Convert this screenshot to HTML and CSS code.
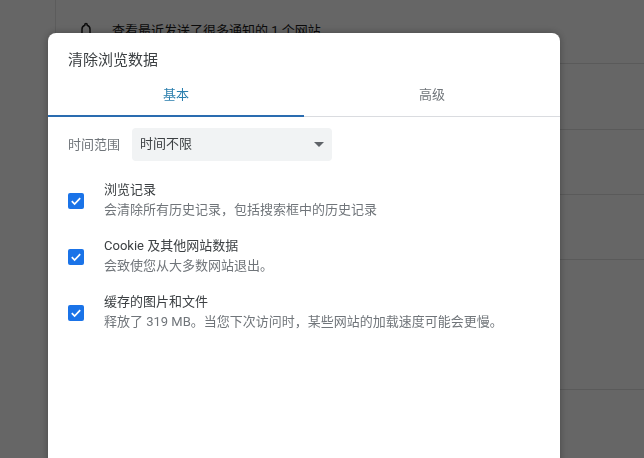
FILE: index.html
```html
<!DOCTYPE html>
<html lang="zh-CN">
<head>
<meta charset="utf-8">
<title>清除浏览数据</title>
<link rel="stylesheet" href="styles.css">
</head>
<body>
<div class="page">
  <div class="side"></div>
  <main class="list">
    <div class="row row-first">
      <svg class="bell" viewBox="0 0 16 16" width="16" height="16"><path d="M8 1.500a1.200 1.200 0 0 0-1.200 1.200v.5C4.900 3.800 4 5.400 4 7.300V11l-1.300 1.300v.7h10.600v-.7L12 11V7.300c0-1.900-.9-3.500-2.800-4.100v-.5A1.200 1.200 0 0 0 8 1.500z" fill="none" stroke="#1d1d1d" stroke-width="1.500"/></svg>
      <span class="notice">查看最近发送了很多通知的 1 个网站</span>
    </div>
    <div class="row row-b"></div>
    <div class="row row-c"></div>
    <div class="row row-c"></div>
    <div class="row row-d"></div>
  </main>
</div>
<div class="scrim"></div>
<section class="dialog">
  <h1 class="title">清除浏览数据</h1>
  <div class="tabs">
    <div class="tab tab-active">基本</div>
    <div class="tab">高级</div>
  </div>
  <div class="range">
    <span class="range-label">时间范围</span>
    <div class="select">
      <span>时间不限</span>
      <span class="caret"></span>
    </div>
  </div>
  <div class="options">
    <div class="option">
      <span class="box"><svg viewBox="0 0 16 16" width="16" height="16"><path d="M3.800 8.200l2.800 2.800 5.600-5.800" fill="none" stroke="#fff" stroke-width="1.700"/></svg></span>
      <div class="option-text">
        <div class="option-name">浏览记录</div>
        <div class="option-desc">会清除所有历史记录，包括搜索框中的历史记录</div>
      </div>
    </div>
    <div class="option">
      <span class="box"><svg viewBox="0 0 16 16" width="16" height="16"><path d="M3.800 8.200l2.800 2.800 5.600-5.800" fill="none" stroke="#fff" stroke-width="1.700"/></svg></span>
      <div class="option-text">
        <div class="option-name">Cookie 及其他网站数据</div>
        <div class="option-desc">会致使您从大多数网站退出。</div>
      </div>
    </div>
    <div class="option">
      <span class="box"><svg viewBox="0 0 16 16" width="16" height="16"><path d="M3.800 8.200l2.800 2.800 5.600-5.800" fill="none" stroke="#fff" stroke-width="1.700"/></svg></span>
      <div class="option-text">
        <div class="option-name">缓存的图片和文件</div>
        <div class="option-desc">释放了 319 MB。当您下次访问时，某些网站的加载速度可能会更慢。</div>
      </div>
    </div>
  </div>
</section>
</body>
</html>
```
FILE: styles.css
```css
* { box-sizing: border-box; }
html, body {
  margin: 0;
  height: 458px;
  overflow: hidden;
  background: #fff;
  font-family: Roboto, "Noto Sans CJK SC", sans-serif;
}
.page { display: flex; height: 458px; }
.side { width: 56px; border-right: 1px solid #e6e6e6; }
.list { flex: 1; }
.row { border-bottom: 1px solid #e0e0e0; }
.row-first {
  display: flex;
  align-items: center;
  height: 64px;
  padding: 0 0 4px 22px;
  color: #1a1a1a;
  font-size: 13px;
}
.notice { margin-left: 18px; white-space: nowrap; }
.row-b { height: 66px; }
.row-c { height: 65px; }
.row-d { height: 130px; }
.scrim {
  position: fixed;
  inset: 0;
  background: rgba(0, 0, 0, .6);
}
.dialog {
  position: fixed;
  left: 48px;
  top: 33px;
  width: 512px;
  height: 440px;
  background: #fff;
  border-radius: 8px;
  box-shadow: 0 0 8px rgba(0, 0, 0, .3);
}
.title {
  margin: 0;
  padding: 16px 20px 0;
  height: 46px;
  font-size: 15px;
  line-height: 22px;
  font-weight: 400;
  color: #3c4043;
}
.tabs {
  display: flex;
  height: 38px;
  border-bottom: 1px solid #dadce0;
}
.tab {
  flex: 1;
  padding-top: 5px;
  text-align: center;
  font-size: 13px;
  line-height: 22px;
  color: #70757a;
}
.tab-active {
  color: #2b7fae;
  height: 38px;
  border-bottom: 2px solid #2a6cb0;
}
.range {
  display: flex;
  align-items: center;
  margin: 11px 0 0 20px;
  font-size: 13px;
}
.range-label { width: 64px; padding-bottom: 3px; color: #70757a; }
.select {
  display: flex;
  align-items: center;
  justify-content: space-between;
  width: 200px;
  height: 33px;
  padding: 0 8px 5px;
  background: #f1f3f4;
  border-radius: 4px;
  color: #3c4043;
}
.caret {
  width: 0;
  height: 0;
  margin: 5px 0 0;
  border: 5px solid transparent;
  border-top: 5px solid #5f6368;
  border-bottom: 0;
}
.options { padding: 12px 0 0 20px; }
.option {
  display: flex;
  align-items: center;
  height: 56px;
  font-size: 13px;
  line-height: 20px;
}
.box {
  width: 16px;
  height: 16px;
  margin-right: 20px;
  background: #1a73e8;
  border-radius: 2px;
  flex: none;
}
.box svg { display: block; }
.option-text { padding-bottom: 2px; }
.option-name { color: #3c4043; }
.option-desc { color: #70757a; }
```
